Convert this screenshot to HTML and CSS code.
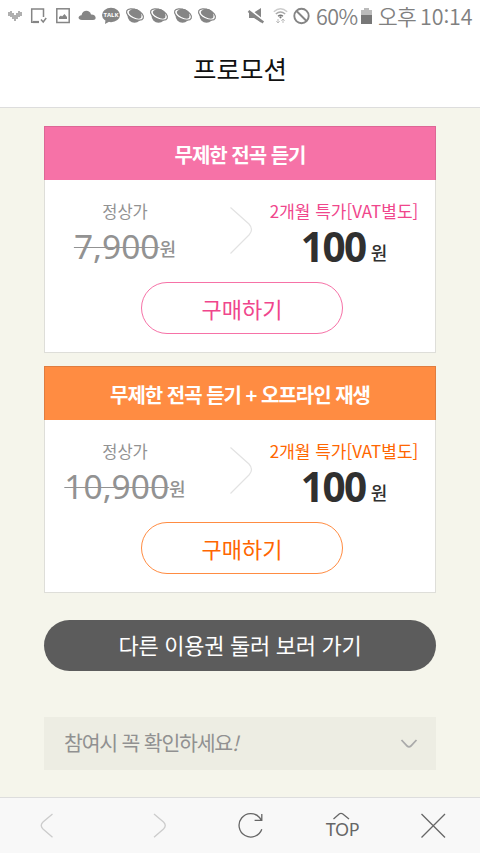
FILE: index.html
```html
<!DOCTYPE html>
<html lang="ko">
<head>
<meta charset="utf-8">
<meta name="viewport" content="width=device-width, initial-scale=1">
<title>프로모션</title>
<link rel="stylesheet" href="styles.css">
</head>
<body>
<svg width="0" height="0" class="defs" aria-hidden="true">
  <symbol id="planet" viewBox="0 0 20 18">
    <circle cx="9.500" cy="9.200" r="7" fill="#858585"/>
    <g transform="rotate(24 10 8)" fill="none">
      <path d="M2.500 8.500c1.500 3.800 12 4.800 15.200.8" stroke="#fff" stroke-width="1.600"/>
      <ellipse cx="10" cy="8" rx="9" ry="4.800" stroke="#858585" stroke-width="1.200"/>
    </g>
  </symbol>
</svg>
<div class="screen">
  <div class="status">
    <svg class="status-left" width="230" height="34" viewBox="0 0 230 34">
      <path d="M9 12v4M11 11v6M13 13v6M15 15v6M17 13v6M19 11v6M21 12v4" stroke="#858585" stroke-width="1.300"/>
      <path d="M35 22.200h-3.300V9h11.800v8M41 19.500l2.200 2.500 3-4" fill="none" stroke="#858585" stroke-width="1.500"/>
      <path d="M33 22h6" stroke="#858585" stroke-width="2.200"/>
      <rect x="56.800" y="8.800" width="12.400" height="13.700" fill="none" stroke="#858585" stroke-width="1.500"/>
      <path d="M59 19v-2l2-1.500 1 1 2.500-2.500 2.500 3v2z" fill="#858585"/>
      <path d="M82 20c-4.500 0-4.500-4.500-.5-4.800C82.500 9.500 90 9.500 91 14.500c5-.5 6.500 5.500 2 5.500z" fill="#858585"/>
      <ellipse cx="111" cy="15" rx="9" ry="7.200" fill="#858585"/>
      <path d="M105.500 20l-.5 4 4.500-2.500z" fill="#858585"/>
      <text x="111" y="17.300" text-anchor="middle" class="talk">TALK</text>
      <use href="#planet" x="125" y="6.500" width="20" height="18"/>
      <use href="#planet" x="149" y="6.500" width="20" height="18"/>
      <use href="#planet" x="173" y="6.500" width="20" height="18"/>
      <use href="#planet" x="197" y="6.500" width="20" height="18"/>
    </svg>
    <div class="status-right">
      <svg width="64" height="34" viewBox="246 0 64 34">
        <path d="M249 12.500h5l7-4.500v14.500l-7-4.500h-5z" fill="#858585"/>
        <path d="M249 9l15 12" stroke="#fff" stroke-width="2"/>
        <path d="M248.500 11l14.800 11.500" stroke="#858585" stroke-width="2.600"/>
        <g fill="none" stroke="#aaa" stroke-width="1.400">
          <path d="M273.800 11.700q6.700-6 13.400 0" stroke="#ccc"/>
          <path d="M275.800 14q4.700-4.200 9.400 0"/>
          <path d="M278 16.200q2.500-2 5 0" stroke="#777"/>
          <path d="M278 19v4M276.300 21.300l1.700 1.700 1.700-1.700M283 23v-4M281.300 20.700l1.700-1.700 1.700 1.700" stroke="#bbb" stroke-width="1"/>
        </g>
        <circle cx="280.500" cy="17.300" r="1.100" fill="#777"/>
        <circle cx="301.500" cy="16" r="7.200" fill="none" stroke="#858585" stroke-width="1.900"/>
        <path d="M296.500 11l10 10" stroke="#858585" stroke-width="1.900"/>
      </svg>
      <span class="battery-text">60%</span>
      <svg width="11" height="34" viewBox="0 0 11 34">
        <path d="M3 8h5v2h3v5H0v-5h3z" fill="#bbb"/><path d="M0 15h11v9H0z" fill="#777"/>
      </svg>
      <span class="ampm">오후</span><span class="clock">10:14</span>
    </div>
  </div>
  <header class="title">프로모션</header>
  <main class="content">
    <section class="card pink">
      <h2>무제한 전곡 듣기</h2>
      <div class="prices">
        <div class="regular">
          <span class="label">정상가</span>
          <div class="amount"><span class="old">7,900</span><span class="won">원</span></div>
        </div>
        <svg class="arrow" width="24" height="50" viewBox="0 0 24 50"><path d="M1.500 1.500L20 18q5 5.500 0 11L1.500 47.500" fill="none" stroke="#e2e2e2" stroke-width="1.200"/></svg>
        <div class="special">
          <span class="label">2개월 특가[VAT별도]</span>
          <div class="amount"><span class="new">100</span><span class="won">원</span></div>
        </div>
      </div>
      <button class="buy">구매하기</button>
    </section>
    <section class="card orange">
      <h2>무제한 전곡 듣기 + 오프라인 재생</h2>
      <div class="prices">
        <div class="regular">
          <span class="label">정상가</span>
          <div class="amount"><span class="old">10,900</span><span class="won">원</span></div>
        </div>
        <svg class="arrow" width="24" height="50" viewBox="0 0 24 50"><path d="M1.500 1.500L20 18q5 5.500 0 11L1.500 47.500" fill="none" stroke="#e2e2e2" stroke-width="1.200"/></svg>
        <div class="special">
          <span class="label">2개월 특가[VAT별도]</span>
          <div class="amount"><span class="new">100</span><span class="won">원</span></div>
        </div>
      </div>
      <button class="buy">구매하기</button>
    </section>
    <button class="more">다른 이용권 둘러 보러 가기</button>
    <div class="notice">
      <span>참여시 꼭 확인하세요<i>!</i></span>
      <svg width="18" height="12" viewBox="0 0 18 12"><path d="M1.500 2l5.700 6q1.800 1.800 3.600 0l5.700-6" fill="none" stroke="#aaa" stroke-width="1.800"/></svg>
    </div>
  </main>
  <nav class="toolbar">
    <svg width="480" height="55" viewBox="0 798 480 55" fill="none" stroke="#666" stroke-width="1.300">
      <path d="M52.500 814l-9.500 8q-3.500 3.500 0 7l9.500 8.300M154 814l9.500 8q3.500 3.500 0 7l-9.500 8.300" stroke="#ccc"/>
      <path d="M261.800 829.200A11.700 11.700 0 1 1 259.500 817.500l2 2.800M261.800 814v6.300h-7.200"/>
      <path d="M333.500 819l6-5.200q1.500-1 3 0l6.500 5.200"/>
      <path d="M421.500 814l23.500 23.500M445 814l-23.500 23.500"/>
      <text x="342.500" y="836" text-anchor="middle" class="top">TOP</text>
    </svg>
  </nav>
</div>
</body>
</html>
```
FILE: styles.css
```css
* { box-sizing: border-box; }
body { margin: 0; font-family: "Noto Sans CJK KR", "Noto Sans", sans-serif; }
.defs { position: absolute; }
svg { display: block; flex: none; }
button { font: inherit; padding: 0; }
.screen { width: 480px; height: 853px; display: flex; flex-direction: column; background: #f5f5eb; overflow: hidden; }
.status { height: 34px; flex: none; background: #fff; display: flex; justify-content: space-between; color: #808080; }
.status-right { display: flex; width: 234px; line-height: 31px; font-size: 21.500px; font-weight: 350; white-space: nowrap; }
.talk { font: bold 6px "Open Sans", sans-serif; fill: #fff; }
.battery-text { width: 51px; padding-left: 6px; letter-spacing: -0.6px; }
.ampm { width: 40px; margin-left: 6px; letter-spacing: -0.8px; }
.clock { padding-left: 2px; letter-spacing: -0.1px; }
.title { height: 73px; flex: none; padding-top: 15px; background: #fff; text-align: center; font-size: 25.500px; line-height: 38px; color: #111; }
.content { flex: 1; border-top: 1px solid #ddd; padding: 18px 44px 0; }
.card { height: 227px; margin-bottom: 13px; background: #fff; border: 1px solid #deded9; border-top: 0; }
.card h2 { height: 54px; margin: 0 -1px; border: 1px solid; border-bottom: 0; color: #fff; text-align: center; font-size: 20px; line-height: 56px; font-weight: 700; letter-spacing: -1px; }
.pink h2 { background: #f672a7; border-color: #dd6796; }
.orange h2 { background: #ff8c42; border-color: #e07d3f; }
.prices { height: 102px; display: flex; }
.regular { width: 160px; text-align: center; color: #929292; }
.arrow { margin: 26px 0 0 24px; }
.special { width: 182px; text-align: center; }
.label { display: block; padding-top: 19px; height: 43px; line-height: 24px; font-size: 16.500px; }
.special .label { font-size: 17px; letter-spacing: 0; }
.pink .special .label, .pink .buy { color: #f0468c; }
.orange .special .label, .orange .buy { color: #ff6600; }
.amount { display: flex; justify-content: center; align-items: baseline; line-height: 46px; }
.old { font-family: "Noto Sans", sans-serif; font-size: 33.500px; text-decoration: line-through; text-decoration-thickness: 1px; }
.won { position: relative; top: -3px; font-size: 18px; font-weight: 500; }
.special .amount { color: #303030; line-height: 48px; }
.special .won { top: -2px; }
.new { font-family: "Noto Sans", sans-serif; font-weight: 700; font-size: 40.500px; letter-spacing: -1.500px; margin-right: 5px; }
.buy { display: block; width: 202px; height: 52px; margin: 0 0 0 96px; border: 1px solid; border-radius: 26px; background: #fff; font-size: 22px; line-height: 48px; padding-bottom: 1px; }
.pink .buy { border-color: #f672a7; }
.orange .buy { border-color: #ff8c42; }
.more { display: block; width: 392px; height: 51px; margin: 27px 0 46px; border: 0; border-radius: 26px; background: #5c5c5c; color: #fff; font-size: 22px; letter-spacing: -0.3px; line-height: 48px; padding-bottom: 3px; }
.notice { height: 53px; padding: 0 18px 0 20px; background: #edede3; display: flex; align-items: center; justify-content: space-between; color: #919191; font-size: 20.500px; letter-spacing: -1.200px; }
.notice span { padding-bottom: 4px; }
.toolbar { height: 56px; flex: none; background: #f8f8f8; border-top: 1px solid #ddd; }
.top { font: 17px Lato, sans-serif; fill: #666; stroke: none; }
```
